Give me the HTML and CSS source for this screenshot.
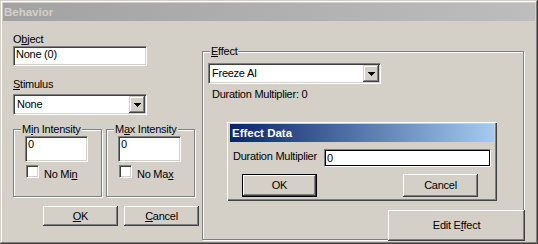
FILE: index.html
```html
<!DOCTYPE html>
<html>
<head>
<meta charset="utf-8">
<link rel="stylesheet" href="styles.css">
</head>
<body>
<div class="window">
  <div class="titlebar inactive"><span class="title-text">Behavior</span></div>
  <div class="content">
    <div class="left">
      <div class="label lbl-object">O<u>b</u>ject</div>
      <div class="textbox tb-object">None (0)</div>
      <div class="label lbl-stimulus"><u>S</u>timulus</div>
      <div class="combo combo-stimulus">
        <span class="combo-value">None</span>
        <span class="drop"><svg width="7" height="4" viewBox="0 0 7 4"><path d="M0 0h7v1h-1v1h-1v1h-1v1h-1v-1h-1v-1h-1v-1h-1z" fill="#000"/></svg></span>
      </div>
      <div class="groups">
        <div class="group intensity">
          <span class="group-label">M<u>i</u>n Intensity</span>
          <div class="textbox tb-intensity">0</div>
          <div class="check-row"><span class="checkbox"></span><span class="check-label">No Mi<u>n</u></span></div>
        </div>
        <div class="group intensity">
          <span class="group-label">M<u>a</u>x Intensity</span>
          <div class="textbox tb-intensity">0</div>
          <div class="check-row"><span class="checkbox"></span><span class="check-label">No Ma<u>x</u></span></div>
        </div>
      </div>
      <div class="buttons">
        <div class="button btn-main"><u>O</u>K</div>
        <div class="button btn-main"><u>C</u>ancel</div>
      </div>
    </div>
    <div class="group effect">
      <span class="group-label"><u>E</u>ffect</span>
      <div class="combo combo-effect">
        <span class="combo-value">Freeze AI</span>
        <span class="drop"><svg width="7" height="4" viewBox="0 0 7 4"><path d="M0 0h7v1h-1v1h-1v1h-1v1h-1v-1h-1v-1h-1v-1h-1z" fill="#000"/></svg></span>
      </div>
      <div class="duration">Duration Multiplier: 0</div>
      <div class="dialog">
        <div class="titlebar active"><span class="title-text">Effect Data</span></div>
        <div class="dialog-row">
          <span class="dialog-label">Duration Multiplier</span>
          <div class="textbox tb-dialog">0</div>
        </div>
        <div class="dialog-buttons">
          <div class="button btn-dialog default">OK</div>
          <div class="button btn-dialog">Cancel</div>
        </div>
      </div>
      <div class="button btn-edit">Edit E<u>f</u>fect</div>
    </div>
  </div>
</div>
</body>
</html>
```
FILE: styles.css
```css
* { box-sizing: border-box; }
html, body { margin: 0; padding: 0; background: #d4d0c8; }
body {
  font-family: "Liberation Sans", Arial, sans-serif;
  font-size: 11px;
  line-height: 13px;
  letter-spacing: -0.25px;
  color: #000;
}
u { text-decoration: underline; text-underline-offset: 1px; }

.window {
  width: 538px;
  height: 244px;
  padding: 3px;
  background: #d4d0c8;
  box-shadow: inset -1px -1px #404040, inset 1px 1px #d4d0c8, inset -2px -2px #808080, inset 2px 2px #fff;
}

.titlebar {
  height: 18px;
  display: flex;
  align-items: center;
  padding-left: 1px;
}
.titlebar.inactive { background: linear-gradient(to right, #a2a2a2, #bdbdbd); }
.titlebar.inactive .title-text { color: #d4d0c8; }
.titlebar.active { background: linear-gradient(to right, #0a246a, #a6caf0); padding-left: 2px; }
.titlebar.active .title-text { color: #fff; }
.title-text {
  font-weight: bold;
  font-size: 11.5px;
  line-height: 18px;
  letter-spacing: 0;
}

.content {
  display: flex;
  align-items: flex-start;
  padding: 12px 0 0 10px;
}

.left {
  width: 185px;
  display: flex;
  flex-direction: column;
  align-items: flex-start;
}
.label { height: 13px; }
.lbl-stimulus { margin-top: 12px; }

.textbox {
  background: #fff;
  border: 1px solid;
  border-color: #808080 #fff #fff #808080;
  box-shadow: inset 1px 1px #404040, inset -1px -1px #d4d0c8;
  padding: 1px 2px 0 2px;
  white-space: nowrap;
}
.tb-object { width: 134px; height: 20px; }
.tb-intensity { width: 63px; height: 26px; margin-left: 11px; }
.tb-dialog {
  width: 167px;
  height: 18px;
  margin-left: auto;
  margin-right: 3px;
  box-shadow: inset 1px 1px #000, inset -1px -1px #000;
  padding: 2px 2px 0 2px;
  line-height: 13px;
}

.combo {
  display: flex;
  align-items: center;
  height: 21px;
  background: #fff;
  border: 1px solid;
  border-color: #808080 #fff #fff #808080;
  box-shadow: inset 1px 1px #404040, inset -1px -1px #d4d0c8;
  padding: 1px;
}
.combo-value { flex: 1; padding-left: 2px; white-space: nowrap; }
.combo-stimulus { width: 134px; margin-top: 3px; }
.combo-effect { width: 173px; margin: 5px 0 0 5px; }
.drop {
  width: 16px;
  height: 17px;
  background: #d4d0c8;
  box-shadow: inset -1px -1px #404040, inset 1px 1px #d4d0c8, inset -2px -2px #808080, inset 2px 2px #fff;
  display: flex;
  align-items: center;
  justify-content: center;
}
.drop svg { display: block; }

.groups { display: flex; gap: 4px; margin-top: 14px; }
.group {
  border: 1px solid #808080;
  box-shadow: 1px 1px 0 #fff, inset 1px 1px 0 #fff;
  display: flex;
  flex-direction: column;
  align-items: flex-start;
  position: relative;
}
.intensity { width: 89px; height: 68px; }
.group-label {
  display: block;
  height: 13px;
  margin: -7px 0 0 7px;
  padding: 0 1px;
  background: #d4d0c8;
  white-space: nowrap;
}
.check-row { display: flex; align-items: flex-start; margin: 3px 0 0 12px; }
.checkbox {
  width: 13px;
  height: 13px;
  background: #fff;
  border: 1px solid;
  border-color: #808080 #fff #fff #808080;
  box-shadow: inset 1px 1px #404040, inset -1px -1px #d4d0c8;
}
.check-label { margin: 3px 0 0 5px; }

.buttons { display: flex; gap: 6px; margin: 9px 0 0 30px; }

.button {
  display: flex;
  align-items: center;
  justify-content: center;
  background: #d4d0c8;
  box-shadow: inset -1px -1px #404040, inset 1px 1px #fff, inset -2px -2px #808080, inset 2px 2px #d4d0c8;
  white-space: nowrap;
}
.btn-main { width: 75px; height: 20px; padding-top: 1px; }

.effect {
  width: 322px;
  height: 189px;
  margin: 18px 0 0 4px;
}
.duration { margin: 4px 0 0 9px; }

.dialog {
  position: absolute;
  left: 24px;
  top: 70px;
  width: 270px;
  height: 79px;
  background: #d4d0c8;
  padding: 2px 3px 0 3px;
  box-shadow: inset 1px 1px #fff, inset -1px -1px #404040, inset -2px -2px #808080;
}
.dialog-row { display: flex; align-items: flex-start; margin-top: 7px; }
.dialog-label { margin: 1px 0 0 3px; white-space: nowrap; }
.dialog-buttons {
  display: flex;
  justify-content: space-between;
  margin-top: 7px;
  padding: 0 16px 0 12px;
}
.btn-dialog { width: 75px; height: 23px; }
.btn-dialog.default {
  box-shadow: inset 0 0 0 1px #000, inset -2px -2px #404040, inset 2px 2px #fff, inset -3px -3px #808080;
}

.btn-edit {
  position: absolute;
  right: -2px;
  bottom: -2px;
  width: 137px;
  height: 31px;
}
```
